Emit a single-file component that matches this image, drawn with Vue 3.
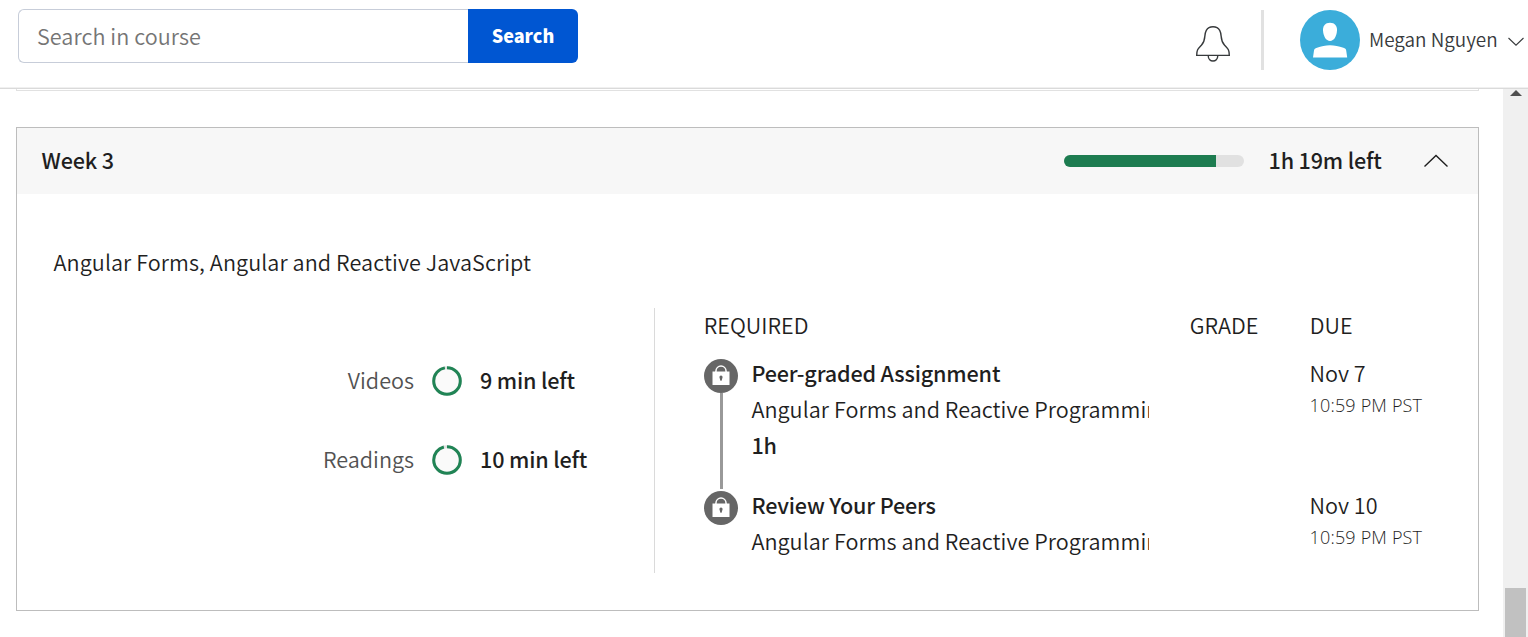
<script setup>
import { ref } from 'vue'

const query = ref('')
const ringRadius = 13.3
const ringLength = 2 * Math.PI * ringRadius

const progress = [
  { label: 'Videos', left: '9 min left', done: 0.967, cls: 'videos' },
  { label: 'Readings', left: '10 min left', done: 0.955, cls: 'readings' },
]

const items = [
  {
    title: 'Peer-graded Assignment',
    name: 'Angular Forms and Reactive Programming',
    duration: '1h',
    date: 'Nov 7',
    time: '10:59 PM PST',
    cls: 'peer',
  },
  {
    title: 'Review Your Peers',
    name: 'Angular Forms and Reactive Programming',
    duration: '',
    date: 'Nov 10',
    time: '10:59 PM PST',
    cls: 'review',
  },
]
</script>

<template>
  <div class="page">
    <header class="topbar">
      <form class="search" @submit.prevent>
        <input v-model="query" class="search-input" type="text" placeholder="Search in course" />
        <button class="search-button" type="submit">Search</button>
      </form>
      <div class="account">
        <svg class="bell" width="36" height="40" viewBox="0 0 36 40" fill="none" stroke="#373a3c" stroke-width="1.4">
          <path d="M1.7 31.4H34.3C34.3 25.2 32.5 24.4 29.6 21.2C24.3 15.5 27.6 11.5 24.7 6.3C22 1.6 14 1.6 11.3 6.3C8.4 11.5 11.7 15.5 6.4 21.2C3.5 24.4 1.7 25.2 1.7 31.4Z" />
          <path d="M13.2 31.6C13.2 38.8 22.8 38.8 22.8 31.6" />
        </svg>
        <span class="divider"></span>
        <svg class="avatar" width="60" height="60" viewBox="0 0 60 60">
          <circle cx="30" cy="30" r="30" fill="#3badda" />
          <path fill="#fff" d="M30 12.8C34.8 12.8 37.3 16.1 37 20.8C36.6 26.2 34 31 30 31C26 31 23.4 26.2 23 20.8C22.7 16.1 25.2 12.8 30 12.8Z" />
          <path fill="#fff" d="M13 47.5L14 40.6C14.2 39 15.2 38.2 17 37.7C21.2 36.3 25.5 35.3 30 35.3C34.5 35.3 38.8 36.3 43.4 37.7C45.2 38.2 46 39 46.2 40.6L47.2 47.5Z" />
        </svg>
        <span class="user">Megan Nguyen</span>
        <svg class="caret" width="16" height="10" viewBox="0 0 16 10" fill="none" stroke="#373a3c" stroke-width="1.1">
          <path d="M.5 1L8 8.2L15.5 1" />
        </svg>
      </div>
    </header>

    <div class="body">
      <main class="content">
        <div class="previous"></div>
        <section class="week">
          <div class="week-head">
            <h2>Week 3</h2>
            <div class="bar"><div class="bar-fill" :style="{ width: '84.4%' }"></div></div>
            <span class="week-left">1h 19m left</span>
            <svg class="chevron" width="24" height="14" viewBox="0 0 24 14" fill="none" stroke="#1f1f1f" stroke-width="1.4">
              <path d="M.5 12.5L12 1.5L23.5 12.5" />
            </svg>
          </div>
          <p class="summary">Angular Forms, Angular and Reactive JavaScript</p>
          <div class="columns">
            <div class="stats">
              <div v-for="p in progress" :key="p.label" class="stat" :class="p.cls">
                <span class="stat-label">{{ p.label }}</span>
                <svg width="30" height="30" viewBox="0 0 30 30" fill="none">
                  <circle cx="15" cy="15" r="13.3" fill="#fafafa" stroke="#e1e1e1" stroke-width="3" />
                  <circle
                    cx="15" cy="15" r="13.3" stroke="#208455" stroke-width="3"
                    transform="rotate(-90 15 15)"
                    :stroke-dasharray="`${ringLength * p.done} ${ringLength}`"
                  />
                </svg>
                <span class="stat-left">{{ p.left }}</span>
              </div>
            </div>
            <div class="required">
              <div class="row heads">
                <span class="h-required">REQUIRED</span>
                <span class="h-grade">GRADE</span>
                <span class="h-due">DUE</span>
              </div>
              <div v-for="(item, i) in items" :key="item.title" class="row item" :class="item.cls">
                <div class="rail">
                  <svg width="34" height="34" viewBox="0 0 34 34">
                    <circle cx="17" cy="17" r="17" fill="#666" />
                    <path d="M11.9 14V12.5C11.9 5.3 22.1 5.3 22.1 12.5V14" fill="none" stroke="#fff" stroke-width="1.5" />
                    <path d="M8.5 12.5H25.5V26H8.5Z" fill="#fff" />
                    <path d="M15.5 18.6A1.6 1.6 0 1 1 18.5 18.6L17.6 21.7H16.4Z" fill="#666" />
                  </svg>
                  <span v-if="i < items.length - 1" class="rail-line"></span>
                </div>
                <div class="details">
                  <div class="title">{{ item.title }}</div>
                  <div class="name">{{ item.name }}</div>
                  <div v-if="item.duration" class="duration">{{ item.duration }}</div>
                </div>
                <div class="due">
                  <div class="date">{{ item.date }}</div>
                  <div class="time">{{ item.time }}</div>
                </div>
              </div>
            </div>
          </div>
        </section>
      </main>
      <div class="scrollbar">
        <svg width="12" height="6" viewBox="0 0 12 6"><path d="M6 0L12 6H0Z" fill="#505050" /></svg>
        <div class="thumb"></div>
      </div>
    </div>
  </div>
</template>

<style>
body {
  background: #fff;
  overflow: hidden;
}
</style>

<style scoped>
.page {
  display: flex;
  flex-direction: column;
  height: 637px;
  width: 1528px;
  overflow: hidden;
  font-family: "Noto Sans CJK JP", "Noto Sans CJK SC", sans-serif;
  font-size: 21.6px;
  font-weight: 350;
  line-height: 36px;
  color: #1f1f1f;
  white-space: nowrap;
}
.page * { box-sizing: border-box; }
.topbar {
  display: flex;
  justify-content: space-between;
  height: 89px;
  flex: none;
  border-bottom: 1px solid #dadada;
  box-shadow: inset 0 -1px #f0f0f0;
}
.search {
  display: flex;
  margin: 9px 0 0 18px;
  height: 54px;
}
.search-input {
  width: 450px;
  padding: 0 0 0 18px;
  border: 1px solid #c7cdd9;
  border-right: 0;
  border-radius: 6px 0 0 6px;
  font: inherit;
  letter-spacing: .05px;
  outline: 0;
}
.search-input::placeholder { color: #757575; opacity: 1; }
.search-button {
  width: 110px;
  padding: 0 0 2px;
  border: 0;
  border-radius: 0 6px 6px 0;
  background: #0056d2;
  color: #fff;
  font: inherit;
  font-size: 18px;
  font-weight: 900;
}
.account {
  display: flex;
  align-items: center;
  height: 80px;
  padding-right: 4px;
}
.bell { margin: 7px 30px 0 0; }
.divider {
  width: 3px;
  height: 60px;
  margin-right: 36px;
  background: #e1e1e1;
}
.user {
  width: 129px;
  margin: 0 10px 2px 9px;
  font-size: 18.9px;
  color: #373a3c;
}
.caret { margin-top: 3px; }
.body {
  display: flex;
  flex: 1;
  min-height: 0;
}
.content {
  width: 1503px;
  padding-left: 16px;
}
.previous {
  width: 1463px;
  height: 2px;
  border: 1px solid #e1e1e1;
  border-top: 0;
}
.week {
  width: 1463px;
  height: 484px;
  margin-top: 36px;
  border: 1px solid #bdbdbd;
}
.week-head {
  display: flex;
  align-items: center;
  height: 66px;
  padding: 0 30px 0 24.6px;
  background: #f7f7f7;
}
h2, p { margin: 0; font: inherit; }
h2 {
  flex: 1;
  padding-bottom: 2px;
  font-weight: 500;
}
.bar {
  width: 180px;
  height: 12px;
  border-radius: 6px;
  overflow: hidden;
  background: #e1e1e1;
}
.bar-fill { height: 100%; background: #1d7c50; }
.week-left {
  width: 114.5px;
  margin: 0 41px 2px 24.5px;
  font-weight: 500;
}
h2, .week-left, .stat-left, .title, .duration { letter-spacing: -.17px; }
.summary { padding: 50px 0 0 36.5px; letter-spacing: .07px; }
.columns {
  display: flex;
  margin-top: 28px;
  height: 265px;
}
.stats {
  display: flex;
  flex-direction: column;
  width: 638px;
  padding-top: 54px;
  gap: 43px;
  border-right: 1px solid #dadada;
}
.stat {
  display: flex;
  align-items: center;
  height: 36px;
}
.stat-label {
  width: 397px;
  margin-right: 18px;
  text-align: right;
  color: #525252;
}
.stat svg { margin-top: 2px; }
.stat-left { margin-left: 18px; font-weight: 500; }
.required { padding-left: 48.8px; margin-top: -1px; }
.row { display: flex; }
.heads { height: 48px; }
.h-required { width: 486px; }
.h-grade { width: 120px; }
.item { height: 132px; }
.rail {
  display: flex;
  flex-direction: column;
  align-items: center;
  width: 34.2px;
  padding: 4px 0 0 .2px;
}
.rail svg { flex: none; }
.rail-line {
  flex: none;
  width: 3px;
  height: 96px;
  margin-left: 1px;
  background: #999;
}
.details { width: 398px; margin: 0 160.2px 0 13.4px; }
.name { overflow: hidden; letter-spacing: .04px; }
.title, .duration { font-weight: 500; }
.time {
  font-family: "Open Sans", sans-serif;
  font-size: 18px;
  font-weight: 350;
  line-height: 28px;
  letter-spacing: .17px;
}
.scrollbar {
  display: flex;
  flex-direction: column;
  justify-content: space-between;
  align-items: center;
  width: 25px;
  padding-top: 1px;
  background: #f0f0f0;
}
.thumb { width: 21px; height: 49px; background: #c1c1c1; }
</style>
